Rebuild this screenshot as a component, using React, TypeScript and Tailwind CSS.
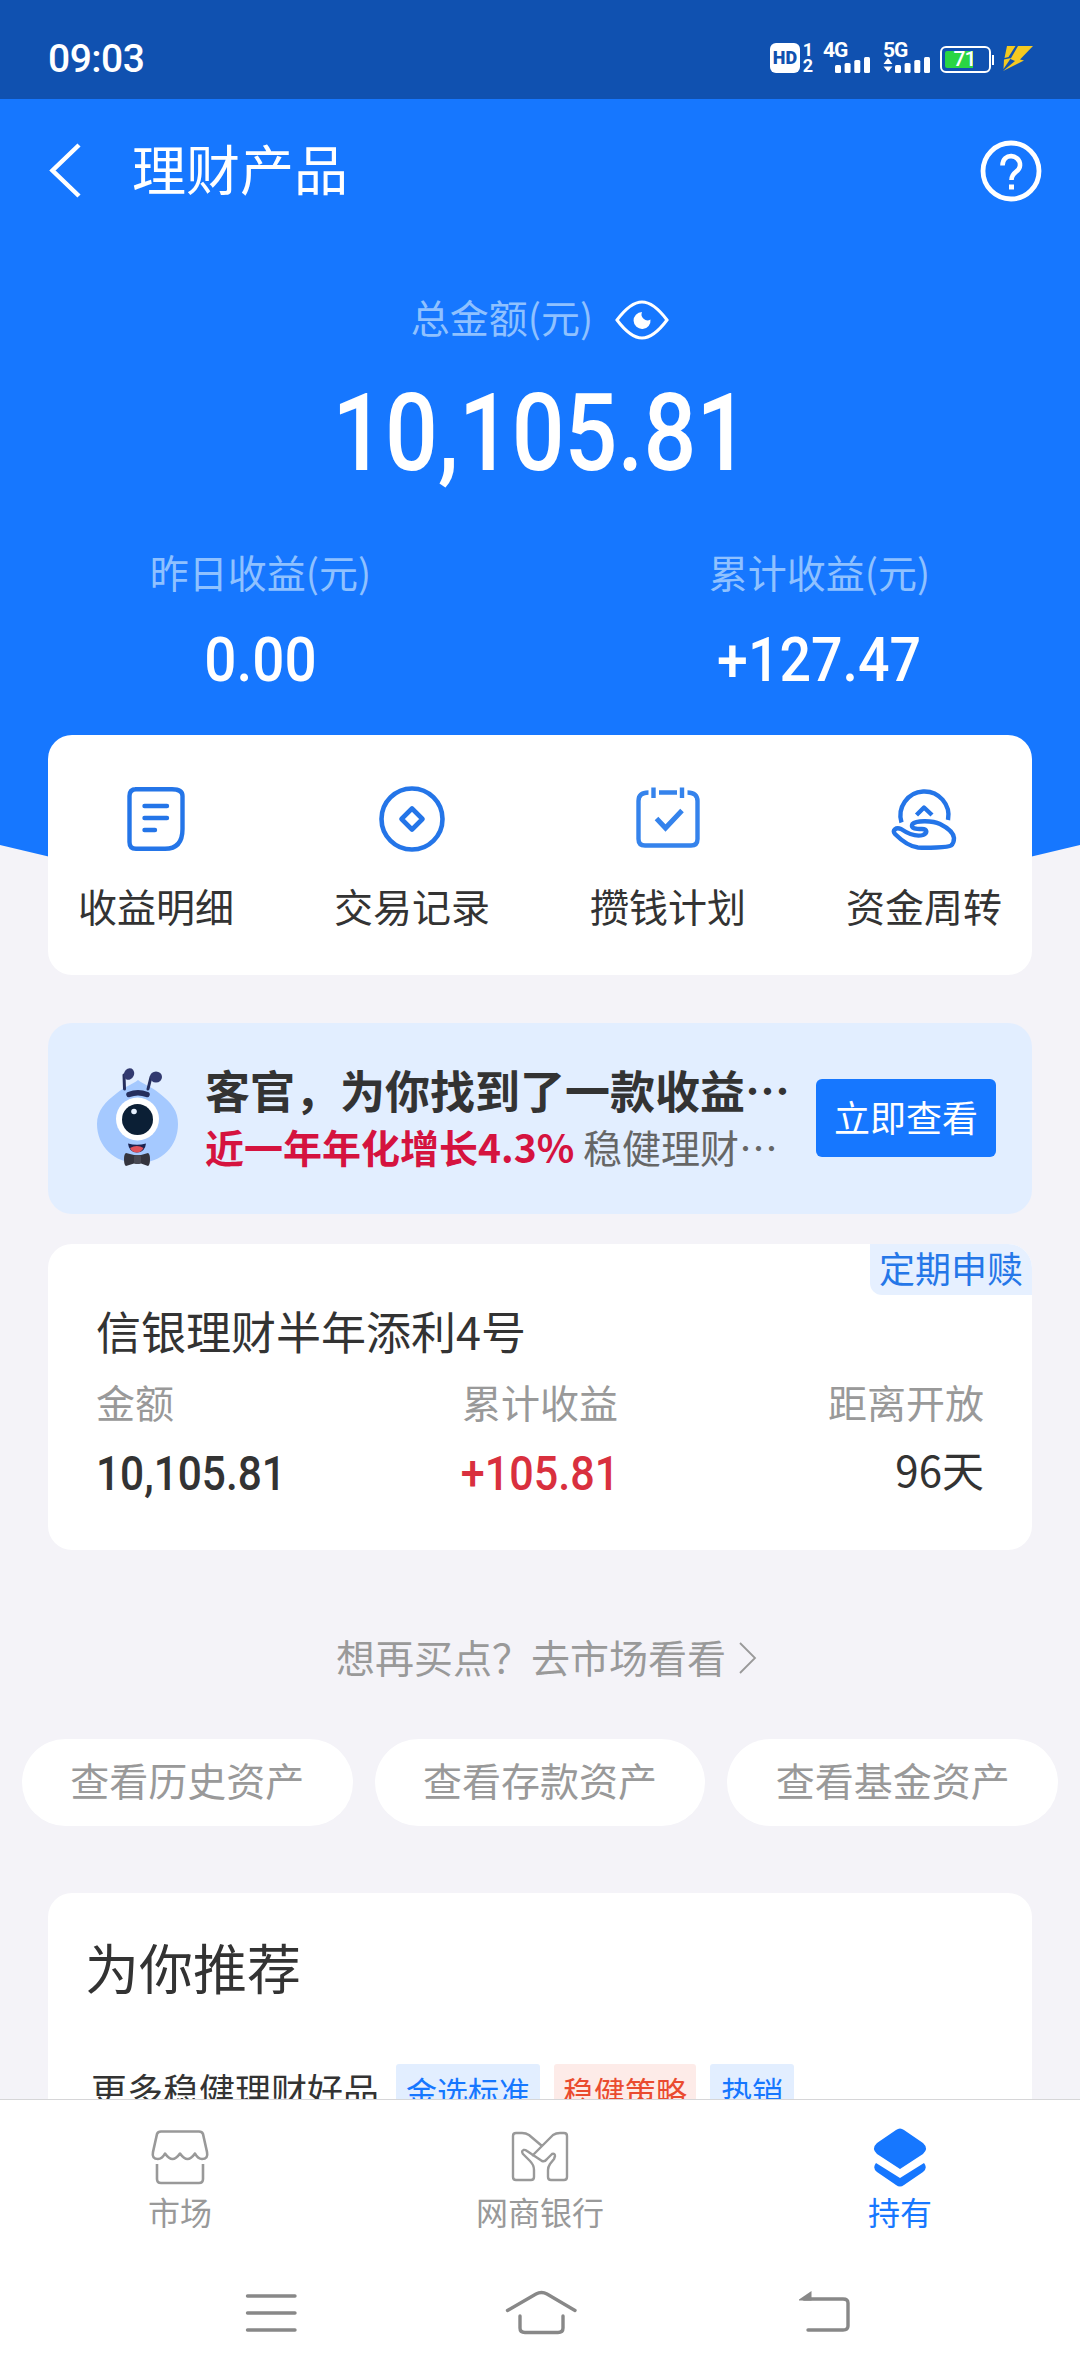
import React from 'react';

const quickActions = [
  { label: '收益明细', icon: <DetailIcon /> },
  { label: '交易记录', icon: <RecordIcon /> },
  { label: '攒钱计划', icon: <PlanIcon /> },
  { label: '资金周转', icon: <TurnoverIcon /> },
];

const assetLinks = ['查看历史资产', '查看存款资产', '查看基金资产'];

function DetailIcon() {
  return (
    <svg width="66" height="66" viewBox="0 0 66 66" fill="none" stroke="#2475e8" strokeWidth="4.4" strokeLinecap="round">
      <path d="M12 3.2H49Q59.500 3.2 59.500 10V43Q59.500 62.800 42 62.800H13Q6.500 62.800 6.500 56V10Q6.500 3.200 13 3.200Z" />
      <path d="M21.500 20H44M21.500 32H44M21.500 44H32" />
    </svg>
  );
}

function RecordIcon() {
  return (
    <svg width="66" height="66" viewBox="0 0 66 66" fill="none" stroke="#2475e8" strokeWidth="4.600">
      <circle cx="33" cy="33" r="30.500" />
      <path d="M33 22.500L43.500 33L33 43.500L22.500 33Z" strokeLinejoin="round" />
    </svg>
  );
}

function PlanIcon() {
  return (
    <svg width="66" height="66" viewBox="0 0 66 66" fill="none" stroke="#3583ec" strokeWidth="4.400">
      <path d="M13.500 6.500Q3.500 6.500 3.500 15V53Q3.500 59.500 10 59.500H56Q62.500 59.500 62.500 53V15Q62.500 6.500 52.500 6.500" />
      <path d="M24 6.500H42M18.500 1.500V12M47 1.500V12" />
      <path d="M21.500 32.500L30.500 42L47 24.500" strokeWidth="5" />
    </svg>
  );
}

function TurnoverIcon() {
  return (
    <svg width="66" height="66" viewBox="0 0 66 66" fill="none" stroke="#2475e8" strokeWidth="4.400" strokeLinejoin="round">
      <path d="M10.500 36.500A24 24 0 1 1 57 34" />
      <path d="M25.500 29L33 21.500L41 29" />
      <path d="M21.500 38C25 34 42 34.500 49 38C57 42 62.500 47 63 52C63 55 62 58 60 59.500C57 61.500 35 62 27 61.500C18 60.500 10 54 4 48C1 44 5 41 10 43C16 47 25 51 32 49C37 47 36 43 31 43C26 43 19 43 21.500 38Z" />
    </svg>
  );
}

function Signal() {
  return (
    <svg width="36" height="16" viewBox="0 0 36 16" fill="white">
      <rect x="0" y="8" width="6" height="8" rx="1.500" />
      <rect x="9.600" y="6" width="6" height="10" rx="1.500" />
      <rect x="19.300" y="3" width="6" height="13" rx="1.500" />
      <rect x="29" y="0" width="6" height="16" rx="1.500" />
    </svg>
  );
}

function AntIcon() {
  return (
    <svg width="82" height="100" viewBox="0 0 82 100">
      <path d="M41 12C46 16 53 18 62 25C75 35 81 43 81 56C81 78 65 95 41 95C17 95 0 78 0 56C0 43 8 34 20 25C29 18 36 16 41 12Z" fill="#a5c9ff" />
      <g stroke="#262f5e" strokeWidth="3" strokeLinecap="round">
        <path d="M27.500 21L27 7M51 21L54 9" />
      </g>
      <ellipse cx="32" cy="6" rx="5" ry="6" fill="#323a70" transform="rotate(25 32 6)" />
      <ellipse cx="59" cy="9" rx="6" ry="5.500" fill="#323a70" />
      <path d="M32 26.500Q41 23 50 26.500" stroke="#262f5e" strokeWidth="5.500" strokeLinecap="round" fill="none" />
      <circle cx="40.500" cy="51" r="21.500" fill="white" />
      <circle cx="40.500" cy="51.500" r="15.500" fill="#0b1f35" />
      <circle cx="37" cy="43.500" r="2.800" fill="#e6f1ff" />
      <path d="M31 75.500Q40 78 49 75.500Q48 84.500 40 84.500Q32 84.500 31 75.500Z" fill="#1c2350" />
      <path d="M33 80Q40 76 46.500 80Q44 84.500 40 84.500Q35 84.500 33 80Z" fill="#e0525b" />
      <path d="M29 85L37 87H44L51 85Q53 86 53 91Q53 97 51 98L44 95.500H37L29 98Q27 97 27 91Q27 86 29 85Z" fill="#34343e" />
      <rect x="37" y="87" width="7" height="9" rx="2" fill="#484852" />
    </svg>
  );
}

function StatusBar() {
  return (
    <div className="flex h-[99px] shrink-0 items-start justify-between bg-[#1051b0] pr-[47px] pl-[48px] text-white">
      <span className="mt-[39px] font-[Roboto,sans-serif] text-[39px] leading-[40px] font-medium tracking-[-0.5px]">09:03</span>
      <div className="mt-[43px] flex h-[30px] font-[Roboto,sans-serif] font-bold">
        <span className="flex size-[30px] items-center justify-center rounded-[6px] bg-white text-[18px] leading-[30px] font-black text-[#1051b0]">HD</span>
        <span className="ml-[2px] flex w-[12px] flex-col justify-between text-center text-[18px] leading-[14px]">
          <span>1</span>
          <span>2</span>
        </span>
        <span className="ml-[9px] flex w-[48px] flex-col">
          <span className="h-[14px] text-[21px] leading-[15px] tracking-[-1px]">4G</span>
          <span className="flex justify-end"><Signal /></span>
        </span>
        <span className="ml-[12px] flex w-[48px] flex-col">
          <span className="h-[14px] text-[21px] leading-[15px] tracking-[-1px]">5G</span>
          <span className="flex justify-between">
            <svg width="10" height="16" viewBox="0 0 10 16" fill="white">
              <path d="M5 1L9.500 7H.500ZM5 15L9.500 9.500H.500Z" />
            </svg>
            <Signal />
          </span>
        </span>
        <span className="mt-[3px] ml-[9px] flex h-[27px] w-[51px] rounded-[6px] border-2 border-white p-[3px]">
          <span className="flex h-full w-[28px] items-center justify-center rounded-l-[2px] bg-[#2ad544]">
            <span className="ml-[11px] text-[21px] leading-none font-medium tracking-[-1px]">71</span>
          </span>
        </span>
        <span className="mt-[12px] ml-px h-[10px] w-[2px] bg-white" />
        <svg className="mt-[2px] ml-[8px]" width="31" height="27" viewBox="0 0 31 27" fill="#f5c920">
          <path d="M5 1H13.500L6.500 12L2.500 13ZM2 14.500L9 13L1.500 24ZM16 1H31L18 14.500L22 15.500L1 26L13 16L8.500 14Z" />
        </svg>
      </div>
    </div>
  );
}

function Hero() {
  return (
    <section className="h-[781px] shrink-0 bg-[#1677ff] text-white [clip-path:polygon(0_0,100%_0,100%_746px,1000px_765px,80px_765px,0_746px)]">
      <header className="flex h-[144px] items-center px-[38px]">
        <svg width="56" height="56" viewBox="0 0 56 56" fill="none" stroke="white" strokeWidth="4.500">
          <path d="M41 2L14.500 27.500L41 53" />
        </svg>
        <h1 className="-mt-[6px] ml-[38px] flex-1 text-[54px] leading-[60px]">理财产品</h1>
        <svg width="62" height="62" viewBox="0 0 62 62" fill="none" stroke="white">
          <circle cx="31" cy="31" r="28" strokeWidth="4.800" />
          <path d="M22.500 25.500C22.500 12 40.500 14 40 25.500C39.500 33 31.500 31 31.500 40" strokeWidth="4.600" />
          <path d="M31.500 44.500V49.500" strokeWidth="5" />
        </svg>
      </header>

      <div className="mt-[47px] flex h-[56px] items-center justify-center">
        <span className="-mt-[4px] text-[39px] leading-[52px] text-[#8fc1ff]">总金额(元)</span>
        <svg className="mt-[4px] ml-[22px]" width="54" height="40" viewBox="0 0 54 40" fill="none">
          <path d="M2 20C8 12 17 2 27 2S46 12 52 20C46 28 37 38 27 38S8 28 2 20Z" stroke="white" strokeWidth="3" />
          <path d="M27 12A8.500 8.500 0 1 0 35.500 19.500A6 6 0 0 1 27 12Z" fill="white" />
        </svg>
      </div>
      <div className="mt-[34px] flex h-[106px] items-center justify-center pl-[2px]">
        <span className="inline-block scale-x-[0.87] font-[Roboto,sans-serif] text-[107px] leading-none font-medium">10,105.81</span>
      </div>

      <div className="mt-[65px] flex justify-center">
        <div className="flex w-[559px] shrink-0 flex-col items-center">
          <span className="text-[39px] leading-[40px] text-[#8fc1ff]">昨日收益(元)</span>
          <span className="mt-[39px] inline-block scale-x-[0.93] font-[Roboto,sans-serif] text-[61px] leading-[60px] font-medium">0.00</span>
        </div>
        <div className="flex w-[559px] shrink-0 flex-col items-center">
          <span className="text-[39px] leading-[40px] text-[#8fc1ff]">累计收益(元)</span>
          <span className="mt-[39px] inline-block scale-x-[0.91] font-[Roboto,sans-serif] text-[61px] leading-[60px] font-medium">+127.47</span>
        </div>
      </div>
    </section>
  );
}

function Banner() {
  return (
    <div className="mt-[48px] flex h-[191px] shrink-0 items-center rounded-3xl bg-[#e2eeff] pr-[36px] pb-[2px] pl-[49px]">
      <AntIcon />
      <div className="ml-[26px] flex-1 whitespace-nowrap">
        <p className="text-[45px] leading-[56px] font-bold text-[#333]">客官，为你找到了一款收益⋯</p>
        <p className="text-[39px] leading-[56px] text-[#666]">
          <span className="font-bold text-[#d5133f]">近一年年化增长4.3%</span> 稳健理财⋯
        </p>
      </div>
      <button className="h-[78px] w-[180px] rounded-md bg-[#1677ff] pb-1 text-[36px] leading-none text-white">立即查看</button>
    </div>
  );
}

function ProductCard() {
  return (
    <div className="relative mt-[30px] h-[306px] shrink-0 overflow-hidden rounded-3xl bg-white px-[48px] pt-[61px] text-[#333]">
      <span className="absolute top-0 right-0 h-[51px] w-[162px] rounded-bl-xl bg-[#e6f0ff] text-center text-[36px] leading-[46px] text-[#2577e8]">
        定期申赎
      </span>
      <h2 className="text-[45px] leading-[52px]">信银理财半年添利4号</h2>
      <div className="mt-[18px] flex justify-between">
        <div className="flex w-[190px] flex-col">
          <span className="text-[39px] leading-[52px] text-[#999]">金额</span>
          <span className="mt-[21px] inline-block origin-left scale-x-[0.865] font-[Roboto,sans-serif] text-[49px] leading-[52px] font-medium">10,105.81</span>
        </div>
        <div className="flex flex-col items-center">
          <span className="text-[39px] leading-[52px] text-[#999]">累计收益</span>
          <span className="mt-[21px] inline-block scale-x-[0.88] font-[Roboto,sans-serif] text-[49px] leading-[52px] font-medium text-[#d9303e]">+105.81</span>
        </div>
        <div className="flex w-[190px] flex-col items-end">
          <span className="text-[39px] leading-[52px] text-[#999]">距离开放</span>
          <span className="mt-[16px] text-[42px] leading-[52px]">96天</span>
        </div>
      </div>
    </div>
  );
}

function Recommend() {
  return (
    <div className="mx-[48px] mt-[67px] h-[300px] shrink-0 rounded-t-3xl bg-white text-[#333]">
      <h2 className="pt-[44px] pl-[37px] text-[54px] leading-[60px]">为你推荐</h2>
      <div className="mt-[67px] ml-[43px] flex items-start text-[31px] leading-[54px]">
        <span className="mr-[17px] text-[36px] leading-[50px]">更多稳健理财好品</span>
        <span className="rounded-[3px] bg-[#e2eeff] px-[10px] text-[#1677ff]">金选标准</span>
        <span className="ml-[14px] rounded-[3px] bg-[#fdebe8] px-[9px] text-[#ea4b2f]">稳健策略</span>
        <span className="ml-[14px] rounded-[3px] bg-[#e2eeff] px-[11px] text-[#1677ff]">热销</span>
      </div>
    </div>
  );
}

function TabBar() {
  return (
    <nav className="grid h-[151px] shrink-0 grid-cols-3 border-t border-[#d6d6d8] bg-white pt-[27px] text-[32px] leading-[44px] text-[#999]">
      <div className="flex flex-col items-center">
        <svg width="60" height="60" viewBox="0 0 60 60" fill="none" stroke="#999" strokeWidth="2.600" strokeLinejoin="round">
          <path d="M11 4.500H49Q52 4.500 53 7L57 25Q58.500 32 52 32Q48 32 45 26.500Q41 32 37.500 32T30 26.500Q26 32 22.500 32T15 26.500Q12 32 8 32Q1.500 32 3 25L7 7Q8 4.500 11 4.500Z" />
          <path d="M7 37V52Q7 56 11 56H49Q53 56 53 52V37" />
        </svg>
        <span className="mt-[2px]">市场</span>
      </div>
      <div className="flex flex-col items-center">
        <svg width="60" height="60" viewBox="0 0 60 60" fill="none" stroke="#999" strokeWidth="2.400" strokeLinejoin="round">
          <path d="M22 29L32 19L19 8Q16 6 12 6H6Q3 6 3 9V50Q3 53 6 53H21Q24 53 24 50V43Q24 38 20 34L13 27Q11 24 13.500 23Q15 22.500 17 24L32 34Q35 35 37 32L42 27Q45 26 45 29L44 32L40 37Q38 40 38 43V50Q38 53 41 53H54Q57 53 57 50V9Q57 6 54 6H50Q46 6 43 8L32 19" />
        </svg>
        <span className="mt-[2px]">网商银行</span>
      </div>
      <div className="flex flex-col items-center text-[#1677ff]">
        <svg width="60" height="60" viewBox="0 0 60 60" fill="#1677ff">
          <path d="M26 3Q30 0 34 3L53 16Q59 21.500 53 27L30 42L7 27Q1 21.500 7 16Z" />
          <path d="M6 36L30 51L54 36Q58 41 53 45L34 58Q30 61 26 58L7 45Q2 41 6 36Z" />
        </svg>
        <span className="mt-[2px]">持有</span>
      </div>
    </nav>
  );
}

function SystemNav() {
  return (
    <div className="flex h-[126px] shrink-0 items-start bg-white pt-[37px] pl-[235px]">
      <svg width="72" height="50" viewBox="0 0 72 50" stroke="#888" strokeWidth="3.400" strokeLinecap="round">
        <path d="M12.500 9H60M12.500 26H60M12.500 43H60" />
      </svg>
      <svg className="ml-[198px]" width="72" height="50" viewBox="0 0 72 50" fill="none" stroke="#888" strokeWidth="3.400" strokeLinecap="round">
        <path d="M2.500 23.500L31 7Q36.500 4 42 7L70 23.500" />
        <path d="M15 29V41Q15 45.500 20 45.500H53Q58 45.500 58 41V29" />
      </svg>
      <svg className="ml-[211px]" width="72" height="50" viewBox="0 0 72 50" fill="none" stroke="#888" strokeWidth="3.400" strokeLinecap="round">
        <path d="M16 12H55Q60 12 60 16V39Q60 43 55 43H20" />
        <path d="M11 12.500L23.500 4V13.500H11Z" fill="#888" stroke="none" />
      </svg>
    </div>
  );
}

const App: React.FC = () => {
  return (
    <div
      lang="zh-CN"
      className="flex h-[2376px] w-[1080px] flex-col overflow-hidden bg-[#f4f3f8] font-['Noto_Sans_CJK_SC',sans-serif]"
    >
      <StatusBar />
      <main className="flex min-h-0 flex-1 flex-col overflow-hidden">
        <Hero />

        {/* Cards overlap the lower edge of the blue hero */}
        <div className="z-10 mx-[48px] -mt-[145px] flex shrink-0 flex-col">
          <div className="flex h-[240px] justify-between rounded-3xl bg-white px-[30px] pt-[51px]">
            {quickActions.map((item) => (
              <div key={item.label} className="flex flex-col items-center">
                {item.icon}
                <span className="mt-[27px] text-[39px] leading-[52px] text-[#333]">{item.label}</span>
              </div>
            ))}
          </div>
          <Banner />
          <ProductCard />
        </div>

        <div className="mt-[79px] flex shrink-0 items-center justify-center pl-[14px] text-[39px] leading-[54px] text-[#999]">
          想再买点？去市场看看
          <svg className="mt-[4px] ml-[12px]" width="20" height="34" viewBox="0 0 20 34" fill="none" stroke="#999" strokeWidth="1.800">
            <path d="M2 2L17 17L2 32" />
          </svg>
        </div>

        <div className="mt-[56px] flex shrink-0 gap-[22px] px-[22px]">
          {assetLinks.map((text) => (
            <div key={text} className="h-[87px] flex-1 rounded-full bg-white text-center text-[39px] leading-[81px] text-[#999]">
              {text}
            </div>
          ))}
        </div>

        <Recommend />
      </main>
      <TabBar />
      <SystemNav />
    </div>
  );
};

export default App;
